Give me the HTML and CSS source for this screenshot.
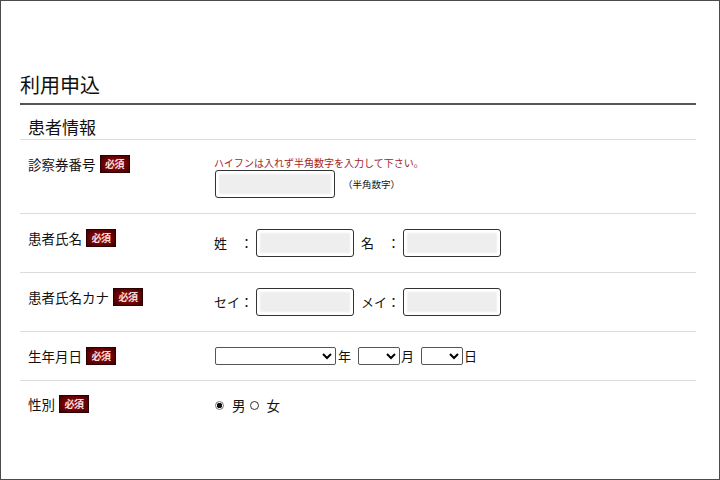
FILE: index.html
```html
<!DOCTYPE html>
<html lang="ja">
<head>
<meta charset="utf-8">
<title>利用申込</title>
<link rel="stylesheet" href="styles.css">
</head>
<body>
<div class="frame">
  <h1 class="title">利用申込</h1>
  <h2 class="section">患者情報</h2>

  <div class="row">
    <div class="label"><span>診察券番号</span><span class="req">必須</span></div>
    <div class="value">
      <p class="note">ハイフンは入れず半角数字を入力して下さい。</p>
      <div class="inline">
        <input class="field field-wide" type="text">
        <span class="hint">（半角数字）</span>
      </div>
    </div>
  </div>

  <div class="row">
    <div class="label"><span>患者氏名</span><span class="req">必須</span></div>
    <div class="value inline">
      <span class="cap">姓　：</span><input class="field" type="text">
      <span class="cap cap-next">名　：</span><input class="field" type="text">
    </div>
  </div>

  <div class="row">
    <div class="label"><span>患者氏名カナ</span><span class="req">必須</span></div>
    <div class="value inline">
      <span class="cap">セイ：</span><input class="field" type="text">
      <span class="cap cap-next">メイ：</span><input class="field" type="text">
    </div>
  </div>

  <div class="row">
    <div class="label"><span>生年月日</span><span class="req">必須</span></div>
    <div class="value inline">
      <select class="sel sel-year"><option></option></select><span class="unit">年</span>
      <select class="sel sel-small"><option></option></select><span class="unit unit-tight">月</span>
      <select class="sel sel-small"><option></option></select><span class="unit unit-tight">日</span>
    </div>
  </div>

  <div class="row row-last">
    <div class="label"><span>性別</span><span class="req">必須</span></div>
    <div class="value inline radios">
      <input class="radio" type="radio" name="sex" checked><span class="rtext">男</span>
      <input class="radio radio-next" type="radio" name="sex"><span class="rtext">女</span>
    </div>
  </div>
</div>
</body>
</html>
```

FILE: styles.css
```css
html, body {
  margin: 0;
  padding: 0;
  background: #fff;
}

body {
  font-family: "Noto Sans CJK JP", "Noto Sans", sans-serif;
  color: #222;
}

.frame {
  width: 720px;
  height: 480px;
  box-sizing: border-box;
  border: 1px solid #4a4a4a;
  padding: 70px 23px 0 19px;
  overflow: hidden;
}

.title {
  margin: 0;
  font-size: 20px;
  font-weight: normal;
  line-height: 28px;
  padding: 0 0 4px 0;
  border-bottom: 2px solid #555;
  color: #111;
}

.section {
  margin: 0;
  font-size: 17px;
  font-weight: normal;
  line-height: 24px;
  padding: 10px 0 0 8px;
  border-bottom: 1px solid #dcdcdc;
  color: #111;
}

.row {
  display: flex;
  align-items: flex-start;
  padding: 15px 0;
  border-bottom: 1px solid #dcdcdc;
}

.row-last {
  border-bottom: none;
  padding-top: 14px;
}

.label {
  width: 186px;
  padding-left: 8px;
  display: flex;
  align-items: center;
  height: 18px;
  font-size: 13.5px;
  line-height: 18px;
  color: #111;
}

.req {
  display: inline-flex;
  align-items: center;
  justify-content: center;
  width: 30px;
  height: 18px;
  box-sizing: border-box;
  margin-left: 4px;
  background: radial-gradient(ellipse at center, #9a0d12 0%, #6e0306 55%, #3e0000 100%);
  border: 1px solid #2a0000;
  color: #f6dede;
  font-size: 10px;
  font-weight: bold;
  line-height: 1;
  letter-spacing: -0.5px;
}

.value {
  flex: 1;
}

.inline {
  display: flex;
  align-items: center;
}

.note {
  margin: 0;
  font-size: 10px;
  line-height: 15px;
  color: #a3262a;
}

.hint {
  margin-left: 8px;
  font-size: 9.5px;
  color: #111;
}

.field {
  width: 98px;
  height: 28px;
  box-sizing: border-box;
  margin: 0 0 0 3px;
  padding: 0;
  border: 1px solid #333;
  border-radius: 3px;
  background: #eeeeee;
  box-shadow: inset 0 0 2px 3px #fff;
  outline: none;
}

.field-wide {
  width: 120px;
  margin-left: 1px;
}

.cap {
  font-size: 13px;
  line-height: 18px;
  color: #111;
}

.cap-next {
  margin-left: 7px;
}

.sel {
  height: 18px;
  box-sizing: border-box;
  margin: 0;
  padding: 0;
  border: 1px solid #555;
  border-radius: 2px;
  background: #fff;
  font-size: 11px;
  color: #000;
}

.sel-year {
  width: 121px;
  margin-left: 1px;
}

.sel-small {
  width: 42px;
  margin-left: 7px;
}

.unit {
  font-size: 13px;
  line-height: 18px;
  margin-left: 2px;
  color: #111;
}

.unit-tight {
  margin-left: 1px;
}

.radios {
  height: 20px;
}

.radio {
  appearance: none;
  -webkit-appearance: none;
  width: 9px;
  height: 9px;
  margin: 0 0 0 1px;
  box-sizing: border-box;
  border: 1.5px solid #333;
  border-radius: 50%;
  background: #fff;
}

.radio:checked {
  border-color: #777;
  background: radial-gradient(circle, #111 0, #111 2.5px, #fff 3px);
}

.radio-next {
  margin-left: 4px;
}

.rtext {
  margin-left: 8px;
  font-size: 13.5px;
  line-height: 20px;
  color: #111;
}
```
